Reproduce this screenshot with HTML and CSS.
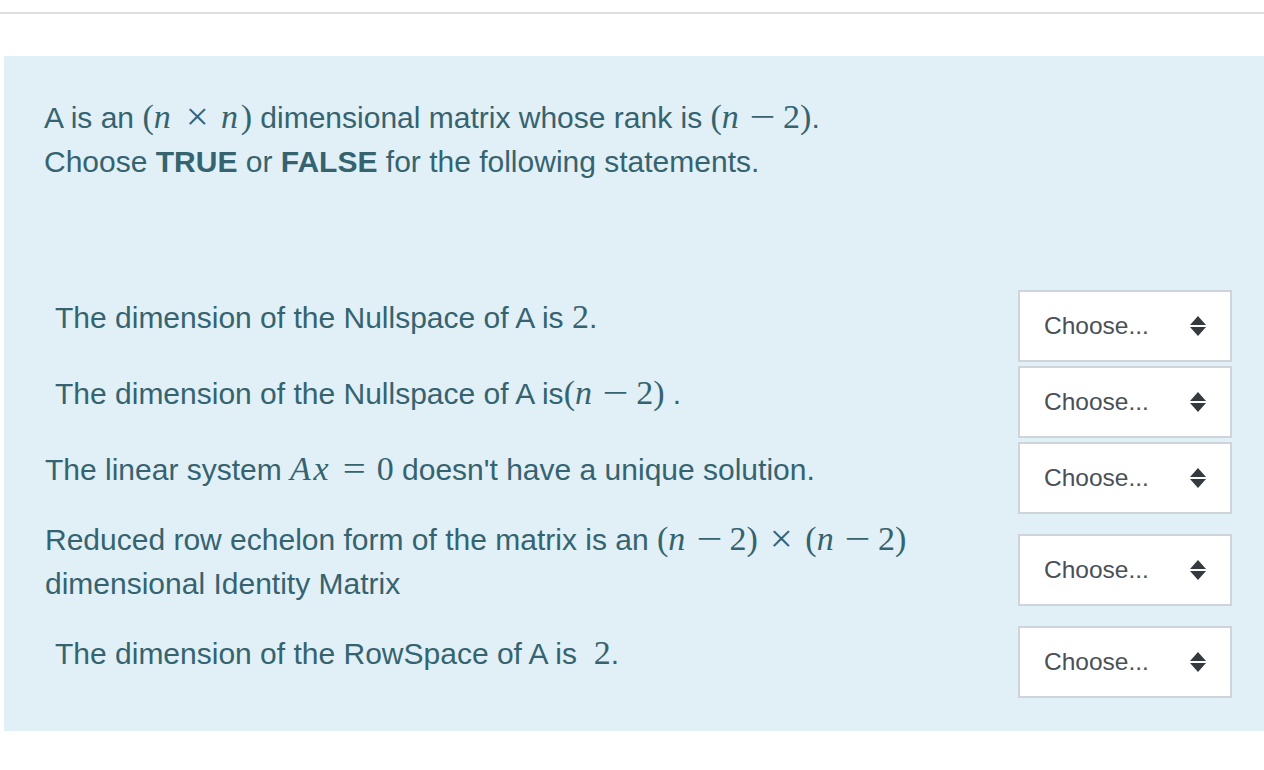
FILE: index.html
```html
<!DOCTYPE html>
<html lang="en">
<head>
<meta charset="utf-8">
<title>Matrix rank question</title>
<link rel="stylesheet" href="styles.css">
</head>
<body>
<div class="topline"></div>
<div class="que">
  <div class="qtext">
    <p>A is an <span class="m">(<i>n</i><span class="bin times">×</span><i>n</i>)</span> dimensional matrix whose rank is <span class="m">(<i>n</i><span class="bin minus">−</span>2)</span>.</p>
    <p>Choose <b>TRUE</b> or <b>FALSE</b> for the following statements.</p>
  </div>
  <div class="answer">
    <div class="stem indent">The dimension of the Nullspace of A is <span class="m">2</span>.</div>
    <div class="control"><div class="select"><span>Choose...</span><svg class="arrows" viewBox="0 0 16 20" width="16" height="20"><path d="M8 0 L16 9 L0 9 Z M0 11 L16 11 L8 20 Z"/></svg></div></div>

    <div class="stem indent">The dimension of the Nullspace of A is<span class="m">(<i>n</i><span class="bin minus">−</span>2)</span> .</div>
    <div class="control"><div class="select"><span>Choose...</span><svg class="arrows" viewBox="0 0 16 20" width="16" height="20"><path d="M8 0 L16 9 L0 9 Z M0 11 L16 11 L8 20 Z"/></svg></div></div>

    <div class="stem">The linear system <span class="m"><i>A</i><i>x</i><span class="rel">=</span>0</span> doesn't have a unique solution.</div>
    <div class="control"><div class="select"><span>Choose...</span><svg class="arrows" viewBox="0 0 16 20" width="16" height="20"><path d="M8 0 L16 9 L0 9 Z M0 11 L16 11 L8 20 Z"/></svg></div></div>

    <div class="stem">Reduced row echelon form of the matrix is an <span class="m">(<i>n</i><span class="bin minus">−</span>2)<span class="bin times">×</span>(<i>n</i><span class="bin minus">−</span>2)</span><br>dimensional Identity Matrix</div>
    <div class="control"><div class="select"><span>Choose...</span><svg class="arrows" viewBox="0 0 16 20" width="16" height="20"><path d="M8 0 L16 9 L0 9 Z M0 11 L16 11 L8 20 Z"/></svg></div></div>

    <div class="stem indent">The dimension of the RowSpace of A is&nbsp; <span class="m">2</span>.</div>
    <div class="control"><div class="select"><span>Choose...</span><svg class="arrows" viewBox="0 0 16 20" width="16" height="20"><path d="M8 0 L16 9 L0 9 Z M0 11 L16 11 L8 20 Z"/></svg></div></div>
  </div>
</div>
</body>
</html>
```
FILE: styles.css
```css
html, body {
  margin: 0;
  padding: 0;
  background: #ffffff;
}

body {
  font-family: "Liberation Sans", Arial, Helvetica, sans-serif;
}

.topline {
  margin-top: 12px;
  height: 2px;
  background: #dedede;
}

.que {
  margin: 42px 0 0 4px;
  padding: 40px 32px 31px 40px;
  background: #e1f0f7;
  color: #35636f;
  font-size: 30px;
  line-height: 44px;
}

.qtext p {
  margin: 0;
}

.qtext b {
  font-weight: bold;
}

.answer {
  margin-top: 104px;
  display: grid;
  grid-template-columns: 1fr 214px;
  align-items: center;
}

.stem {
  padding: 2px 0 18px 1px;
}

.stem.indent {
  padding-left: 11px;
}

.control {
  padding: 2px 0;
}

.select {
  box-sizing: border-box;
  height: 72px;
  background: #ffffff;
  border: 2px solid #ced4da;
  display: flex;
  align-items: center;
  justify-content: space-between;
  padding: 0 24px 0 24px;
  font-size: 24.5px;
  line-height: 28px;
  color: #495057;
}

.arrows {
  fill: #343a40;
  display: block;
}

.m {
  font-family: "Liberation Serif", "Times New Roman", serif;
  font-size: 34px;
  line-height: 0;
}

.m i {
  font-style: italic;
  padding-right: 0.08em;
}

.bin {
  display: inline-block;
  width: 0.778em;
  margin: 0 0.222em;
  text-align: center;
  line-height: 1;
}

.bin.minus {
  transform: scaleX(1.35);
}

.bin.times {
  margin: 0 0.31em;
  transform: scale(1.2);
}

.rel {
  display: inline-block;
  width: 0.778em;
  margin: 0 0.278em;
  text-align: center;
  line-height: 1;
  transform: scaleX(1.2);
}
```
